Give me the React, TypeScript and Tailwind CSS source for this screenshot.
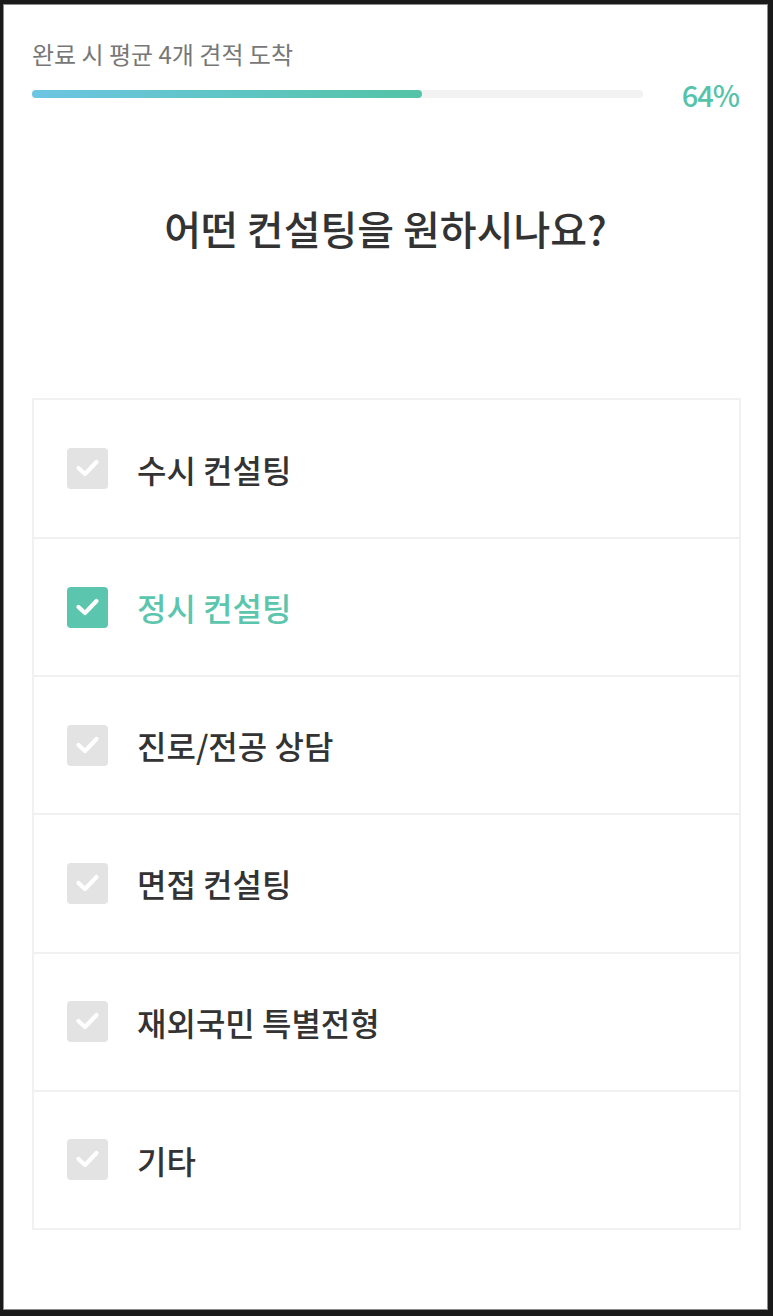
import React, { useState } from "react"

const options = ["수시 컨설팅", "정시 컨설팅", "진로/전공 상담", "면접 컨설팅", "재외국민 특별전형", "기타"]

function Check({ on }: { on: boolean }) {
  return (
    <div className={on ? "w-[41px] h-[41px] rounded-[4px] bg-[#5bc6ad] flex items-center justify-center shrink-0" : "w-[41px] h-[41px] rounded-[4px] bg-[#e3e3e3] flex items-center justify-center shrink-0"}>
      <svg width="41" height="41" viewBox="0 0 41 41" fill="none">
        <path d="M11.5 20 L18 26 L29.5 14" stroke="white" strokeWidth="4.2" strokeLinecap="round" strokeLinejoin="round" />
      </svg>
    </div>
  )
}

export default function App() {
  const [sel, setsel] = useState<number>(1)
  return (
    <div className="bg-[#1a1a1a] w-[773px] h-[1316px] pt-[4px] pl-[3px] pr-[5px] pb-[6px] font-['Noto_Sans_CJK_KR',sans-serif]">
      <div className="bg-white border border-[#8c8c8c] h-full flex flex-col">
        <div className="pl-[28px] pr-[28px] pt-[33px]">
          <div className="text-[24px] leading-[32px] text-[#777]">완료 시 평균 4개 견적 도착</div>
          <div className="flex items-center mt-[9px]">
            <div className="w-[611px] h-[8px] rounded-full bg-[#f2f2f2]">
              <div className="w-[390px] h-[8px] rounded-full bg-gradient-to-r from-[#6cc5e2] to-[#53c4a6]"></div>
            </div>
            <div className="ml-auto text-[29px] font-medium text-[#55c3aa] tracking-[-1px] leading-[30px]">64%</div>
          </div>
        </div>
        <div className="text-center text-[40px] font-medium text-[#333] mt-[95px] leading-[48px]">어떤 컨설팅을 원하시나요?</div>
        <div className="ml-[28px] mr-[26px] mt-[146px] border-2 border-[#f1f1f1]">
          {options.map((o, i) => (
            <div
              key={o}
              onClick={() => setsel(i)}
              className={i === 0 ? "h-[137px] flex items-center pl-[33px] gap-[29px]" : "h-[138.2px] flex items-center pl-[33px] gap-[29px] border-t-2 border-[#f1f1f1]"}
            >
              <Check on={sel === i} />
              <div className={sel === i ? "text-[32px] font-medium text-[#5bc6ad]" : "text-[32px] font-medium text-[#333]"}>{o}</div>
            </div>
          ))}
        </div>
      </div>
    </div>
  )
}
